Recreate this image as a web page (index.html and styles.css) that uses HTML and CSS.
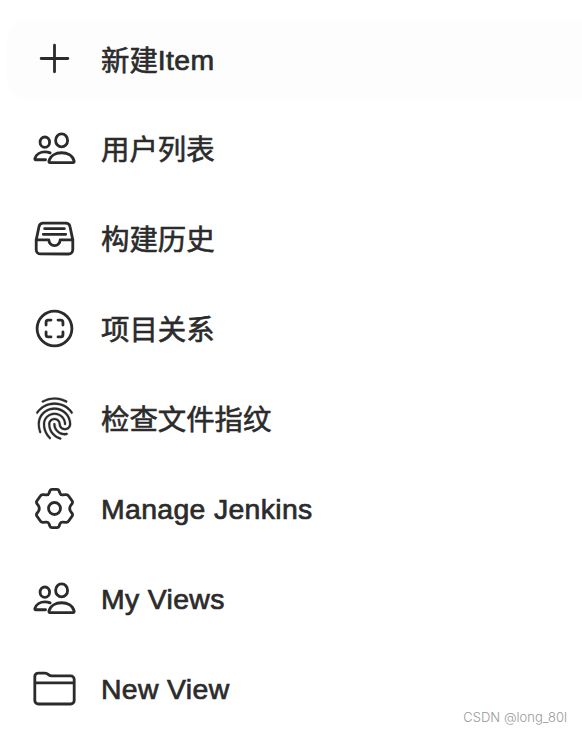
FILE: index.html
```html
<!DOCTYPE html>
<html lang="zh-CN">
<head>
    <meta charset="UTF-8">
    <meta name="viewport" content="width=device-width, initial-scale=1.0">
    <title>Jenkins</title>

    <link rel="stylesheet" href="styles.css">
</head>
<body>
    <svg class="sprite" xmlns="http://www.w3.org/2000/svg">
        <symbol id="people" viewBox="0 0 512 512">
            <ellipse cx="337" cy="164" rx="68" ry="74"/>
            <path d="M336 304c-65.17 0-127.84 32.37-143.54 95.41-2.08 8.34 3.15 16.59 11.72 16.59h263.65c8.57 0 13.77-8.25 11.72-16.59C463.85 335.36 401.18 304 336 304z"/>
            <ellipse cx="146" cy="184" rx="54" ry="59"/>
            <path d="M206 306c-18.05-8.27-37.93-11.45-59-11.45-52 0-102.1 25.85-114.65 76.2-1.65 6.66 2.53 13.25 9.37 13.25H154"/>
        </symbol>
    </svg>

    <nav class="tasks">
        <a class="task task--active">
            <svg class="task__icon" viewBox="0 0 512 512"><path d="M256 104v304M408 256H104"/></svg>
            <span class="task__text">新建<span class="latin">Item</span></span>
        </a>
        <a class="task">
            <svg class="task__icon"><use href="#people"/></svg>
            <span class="task__text">用户列表</span>
        </a>
        <a class="task">
            <svg class="task__icon" viewBox="0 0 512 512">
                <path d="M384 80H128c-26 0-43 14-48 40L48 272v112a48.14 48.14 0 0048 48h320a48.14 48.14 0 0048-48V272l-32-152c-5-27-23-40-48-40z"/>
                <path d="M48 272h144M320 272h144M192 272a64 64 0 00128 0M144 144h224M128 208h256"/>
            </svg>
            <span class="task__text">构建历史</span>
        </a>
        <a class="task">
            <svg class="task__icon" viewBox="0 0 512 512">
                <circle cx="256" cy="256" r="198"/>
                <path d="M296 352h32a24 24 0 0024-24v-32M352 216v-32a24 24 0 00-24-24h-32M216 352h-32a24 24 0 01-24-24v-32M160 216v-32a24 24 0 0124-24h32"/>
            </svg>
            <span class="task__text">项目关系</span>
        </a>
        <a class="task">
            <svg class="task__icon task__icon--filled" viewBox="0 0 512 512">
                <path d="M390.42 75.28a10.45 10.45 0 01-5.32-1.44C340.72 50.08 302.35 40 256.35 40c-45.77 0-89.23 11.28-128.76 33.84C122 77 115.11 74.8 111.87 69a12.4 12.4 0 014.63-16.32A281.81 281.81 0 01256.35 16c49.23 0 92.23 11.28 139.39 36.48a12 12 0 014.85 16.08 11.3 11.3 0 01-10.17 6.72z"/>
                <path d="M59.63 201.28a11.73 11.73 0 01-6.7-2.16 12.26 12.26 0 01-2.78-16.8c22.89-33.6 52-60 86.69-78.48 72.58-38.84 165.51-39.12 238.32-.24 34.68 18.48 63.8 44.64 86.69 78a12.29 12.29 0 01-2.78 16.8 11.26 11.26 0 01-16.18-2.88c-20.8-30.24-47.15-54-78.36-70.56-66.34-35.28-151.18-35.28-217.29.24-31.44 16.8-57.79 40.8-78.59 71.04a10 10 0 01-9.02 5.04z"/>
                <path d="M204.1 491a10.66 10.66 0 01-8.09-3.6C175.9 466.48 165 453 149.55 424c-16-29.52-24.27-65.52-24.27-104.16 0-71.28 58.94-129.36 131.3-129.36S387.88 248.56 387.88 319.84a11.56 11.56 0 11-23.11 0c0-58.08-48.54-105.36-108.19-105.36S148.39 261.76 148.39 319.84c0 34.56 7.4 66.48 21.49 92.4 14.8 27.6 25 39.36 42.77 58.08a12.67 12.67 0 010 17 12.44 12.44 0 01-8.55 3.68z"/>
                <path d="M369.85 446.6c-27.51 0-51.78-7.2-71.66-21.36a129.1 129.1 0 01-55-105.36 11.57 11.57 0 1123.12 0 104.28 104.28 0 0044.84 85.44c16.41 11.52 35.6 16.8 58.72 16.8a147.41 147.41 0 0024-2.4c6.24-1.2 12.25 3.12 13.4 9.84a11.92 11.92 0 01-9.47 13.92 152.28 152.28 0 01-27.95 3.12z"/>
                <path d="M323.38 496a13 13 0 01-3-.48c-36.76-10.56-60.8-24.72-86-50.4-32.37-33.36-50.16-77.76-50.16-125.28 0-38.88 31.9-70.56 71.19-70.56s71.2 31.68 71.2 70.56c0 25.68 21.5 46.56 48.08 46.56s48.08-20.88 48.08-46.56c0-90.48-75.13-163.92-167.59-163.92-65.65 0-125.75 37.92-152.79 96.72-9 19.44-13.64 42.24-13.64 67.2 0 18.72 1.61 48.24 15.48 86.64 2.32 6.24-.69 13.2-6.7 15.36a11.34 11.34 0 01-14.79-7 276.39 276.39 0 01-16.88-95c0-28.8 5.32-55 15.72-77.76 30.75-67 98.94-110.4 173.6-110.4 105.18 0 190.71 84.24 190.71 187.92 0 38.88-31.9 70.56-71.2 70.56s-71.2-31.68-71.2-70.56C303.5 293.92 282 273 255.42 273s-48.08 20.88-48.08 46.56c0 41 15.26 79.44 43.23 108.24 22 22.56 43 35 75.59 44.16 6.24 1.68 9.71 8.4 8.09 14.64a11.39 11.39 0 01-10.87 9.4z"/>
            </svg>
            <span class="task__text">检查文件指纹</span>
        </a>
        <a class="task">
            <svg class="task__icon" viewBox="0 0 512 512">
                <circle cx="256" cy="256" r="68"/>
                <path d="M228 38H284Q302 38 308 54L317 80Q325 103 348 101L386 98Q407 97 417 113L457 171Q466 186 456 200L440 222Q418 256 440 290L456 312Q466 326 457 341L417 399Q407 415 386 414L348 411Q325 409 317 432L308 458Q302 474 284 474H228Q210 474 204 458L195 432Q187 409 164 411L126 414Q105 415 95 399L55 341Q46 326 56 312L72 290Q94 256 72 222L56 200Q46 186 55 171L95 113Q105 97 126 98L164 101Q187 103 195 80L204 54Q210 38 228 38Z"/>
            </svg>
            <span class="task__text latin">Manage Jenkins</span>
        </a>
        <a class="task">
            <svg class="task__icon"><use href="#people"/></svg>
            <span class="task__text latin">My Views</span>
        </a>
        <a class="task">
            <svg class="task__icon" viewBox="0 0 512 512">
                <path d="M440 432H72a40 40 0 01-40-40V120a40 40 0 0140-40h75.89a40 40 0 0122.19 6.72l27.84 18.56a40 40 0 0022.19 6.72H440a40 40 0 0140 40v240a40 40 0 01-40 40zM32 192h448"/>
            </svg>
            <span class="task__text latin">New View</span>
        </a>
    </nav>
    <div class="watermark">CSDN @long_80l</div>
</body>
</html>
```

FILE: styles.css
```css
* {
    margin: 0;
    padding: 0;
    box-sizing: border-box;
}

body {
    background-color: #fff;
    color: #2b2b2b;
    font-family: "Liberation Sans", "Noto Sans CJK SC", sans-serif;
    height: 734px;
    overflow: hidden;
    position: relative;
}

.sprite {
    display: none;
}

.tasks {
    display: flex;
    flex-direction: column;
    gap: 10px;
    padding: 19px 0 0 7px;
}

.task {
    border-radius: 20px 0 0 20px;
    display: flex;
    align-items: center;
    gap: 24px;
    height: 80px;
    padding: 0 0 1px 25px;
}

.task--active {
    background-color: #fdfdfd;
}

.task__icon {
    fill: none;
    flex: none;
    height: 45px;
    stroke: #2b2b2b;
    stroke-linecap: round;
    stroke-linejoin: round;
    stroke-width: 32;
    width: 45px;
}

.task__icon--filled {
    fill: #2b2b2b;
    stroke: #2b2b2b;
    stroke-width: 3;
}

.task__text {
    font-size: 28.4px;
    line-height: 40px;
    padding-top: 3px;
    white-space: nowrap;
    -webkit-text-stroke: 0.6px #2b2b2b;
}

.latin {
    letter-spacing: 0.35px;
    -webkit-text-stroke: 0.7px #2b2b2b;
}

.task__text.latin {
    padding-top: 1px;
}

.task__text .latin {
    vertical-align: 1px;
}

.watermark {
    color: #999;
    font-family: Inter, "Liberation Sans", sans-serif;
    font-size: 13px;
    font-weight: 300;
    line-height: 16px;
    position: absolute;
    right: 15px;
    bottom: 9px;
}
```
